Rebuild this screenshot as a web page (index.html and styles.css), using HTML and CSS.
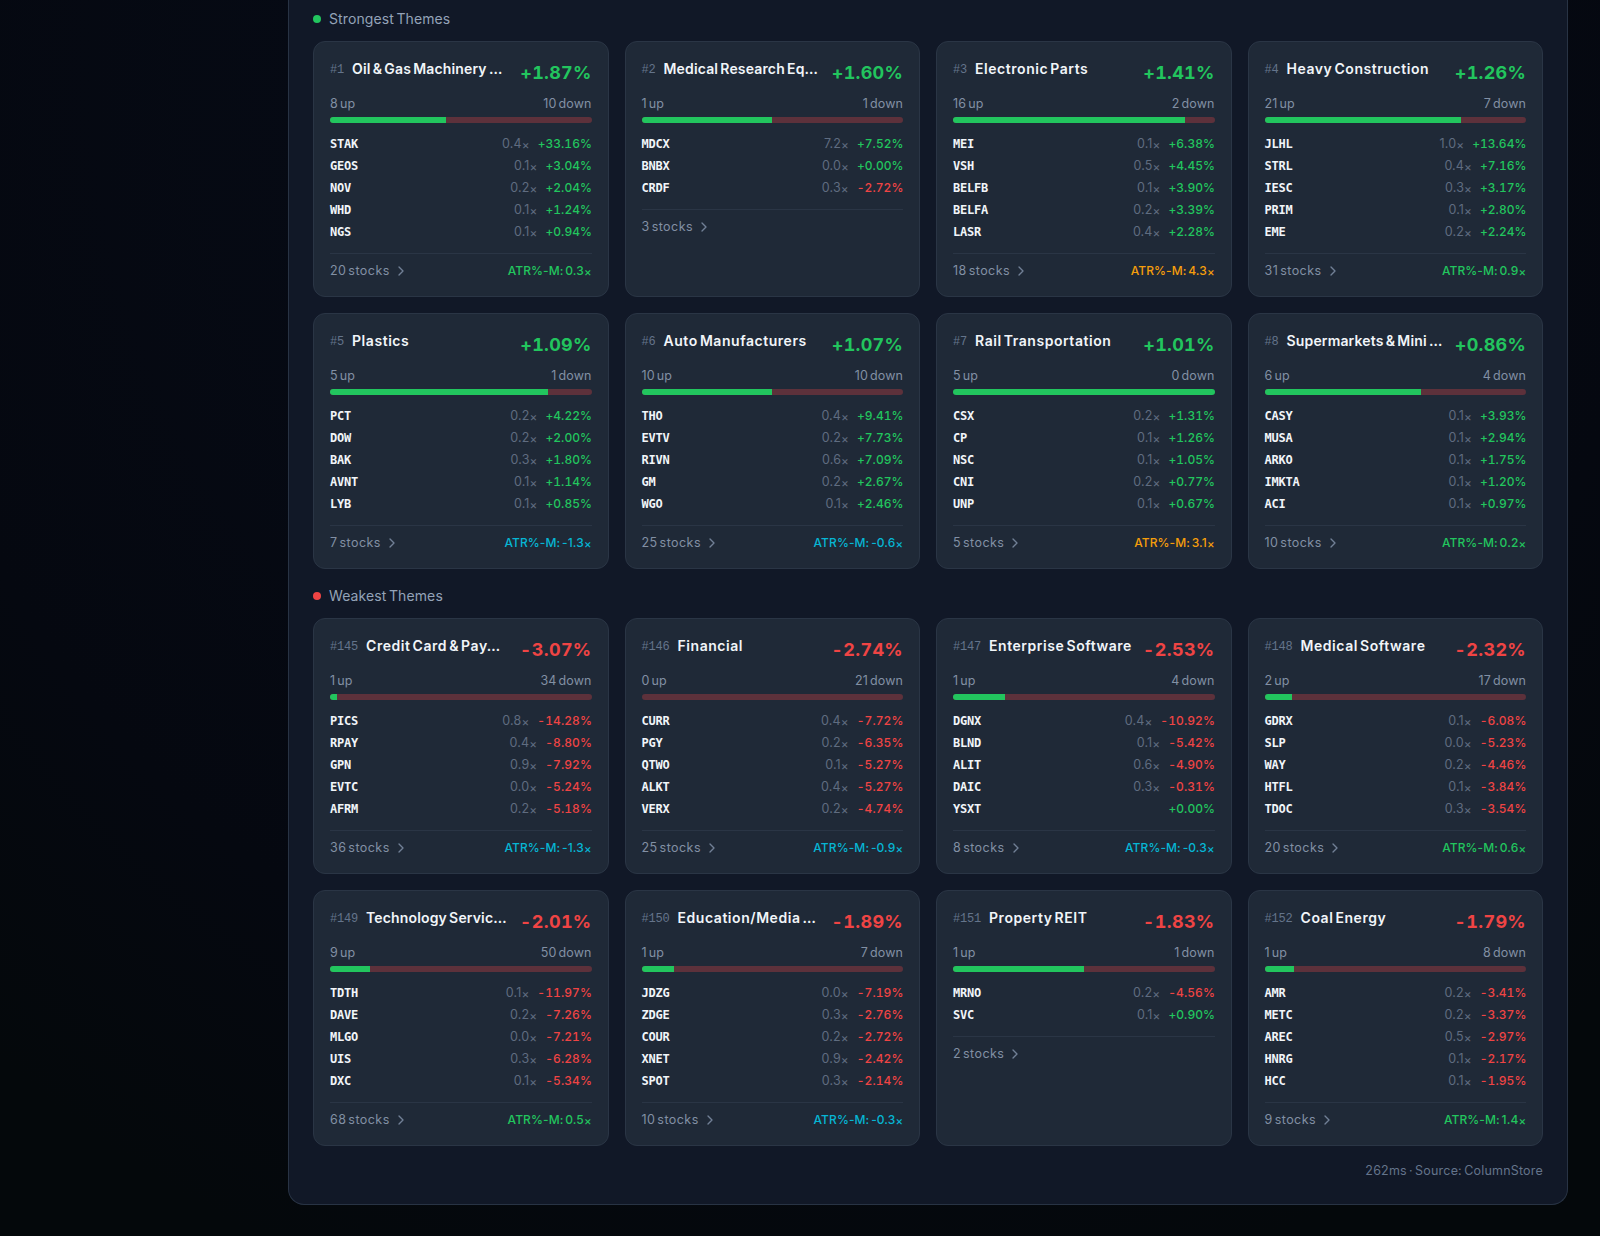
FILE: index.html
```html
<!DOCTYPE html>
<html lang="en">
<head>
<meta charset="utf-8">
<title>Themes</title>
<link rel="stylesheet" href="styles.css">
</head>
<body>
<main class="panel">
  <h2 class="section-title"><span class="dot dot-up"></span>Strongest Themes</h2>
  <section class="grid" id="strongest"></section>
  <h2 class="section-title section-next"><span class="dot dot-down"></span>Weakest Themes</h2>
  <section class="grid" id="weakest"></section>
  <footer class="source">262ms · Source: ColumnStore</footer>
</main>
<script src="themes.js"></script>
</body>
</html>
```
FILE: styles.css
```css
* { box-sizing: border-box; }

body {
  margin: 0;
  height: 1236px;
  overflow: hidden;
  padding-left: 288px;
  background:
    radial-gradient(ellipse 1200px 1300px at 48% 5%, #070c18 0%, #050810 75%, rgba(4, 8, 12, 0) 100%),
    #04080b;
  font-family: Inter, "Liberation Sans", sans-serif;
  font-size: 12px;
  line-height: 18px;
  color: #f1f5f9;
}

.panel {
  width: 1280px;
  height: 1205px;
  padding: 8px 24px 24px;
  background: #111827;
  border: 1px solid #283344;
  border-top: 0;
  border-radius: 0 0 16px 16px;
}

.section-title {
  display: flex;
  align-items: center;
  gap: 8px;
  margin: 0 0 12px;
  font-size: 14px;
  line-height: 21px;
  font-weight: 400;
  letter-spacing: 0.1px;
  word-spacing: -1.5px;
  color: #94a3b8;
}
.section-next { margin-top: 16px; }

.dot { width: 8px; height: 8px; border-radius: 50%; }
.dot-up { background: #22c55e; }
.dot-down { background: #ef4444; }

.grid {
  display: grid;
  grid-template-columns: repeat(4, minmax(0, 1fr));
  gap: 16px;
}

.card {
  height: 256px;
  padding: 16px;
  background: #1f2937;
  border: 1px solid #2a3545;
  border-radius: 12px;
}

.card-head {
  display: flex;
  justify-content: space-between;
  align-items: flex-start;
  height: 27px;
  margin-bottom: 10px;
  white-space: nowrap;
}
.card-name { display: flex; gap: 8px; line-height: 21px; }
.rank {
  font: 400 12px/24px "Liberation Mono", monospace;
  letter-spacing: -0.2px;
  color: #64748b;
}
.name { font-size: 14px; font-weight: 600; letter-spacing: 0.55px; word-spacing: -2px; }
.name-long { letter-spacing: 0.15px; word-spacing: -1.5px; }
.change {
  font-size: 18px;
  line-height: 29px;
  font-weight: 700;
  font-variant-numeric: tabular-nums;
  letter-spacing: 0.25px;
}
.change.down { letter-spacing: 0.35px; }

.counts {
  display: flex;
  justify-content: space-between;
  margin-bottom: 4px;
  font-size: 12.5px;
  letter-spacing: 0.1px;
  word-spacing: -1.5px;
  color: #8290a4;
}

.bar {
  height: 6px;
  margin-bottom: 12px;
  overflow: hidden;
  border-radius: 3px;
  background: #5d313b;
}
.bar-fill { height: 100%; background: #22c55e; }

.stocks { display: grid; gap: 4px; margin-bottom: 12px; }
.stock { display: flex; height: 18px; }
.ticker {
  font: 700 12px/18px "DejaVu Sans Mono", monospace;
  letter-spacing: -0.22px;
}
.rvol { margin-left: auto; margin-right: 8px; font-size: 12.5px; letter-spacing: 0.15px; color: #5f6c80; }
.times { font-size: 0.95em; line-height: 0; vertical-align: -1px; letter-spacing: 0; }
.pct {
  margin-right: -0.5px;
  font-weight: 500;
  font-variant-numeric: tabular-nums;
  letter-spacing: 0.05px;
}
.pct.down { letter-spacing: 0.1px; }

.card-foot {
  display: flex;
  justify-content: space-between;
  padding-top: 8px;
  border-top: 1px solid #2a3545;
  color: #8290a4;
  word-spacing: -1.5px;
}
.more { display: flex; align-items: center; gap: 3px; height: 18px; font-size: 12.5px; letter-spacing: 0.45px; word-spacing: -2px; }
.chevron {
  width: 16px;
  height: 16px;
  fill: none;
  stroke: #718096;
  stroke-width: 2;
  stroke-linecap: round;
  stroke-linejoin: round;
}
.atr { font-weight: 500; letter-spacing: 0.1px; }

.up { color: #22c55e; }
.down { color: #ef4444; }
.hot { color: #f59e0b; }
.cold { color: #06b6d4; }

.source {
  margin-top: 16px;
  text-align: right;
  font-size: 12.5px;
  letter-spacing: 0.2px;
  word-spacing: -1.5px;
  color: #64748b;
}
```
FILE: themes.js
```js
// rank, name, change, up, down, stocks "ticker rvol pct", stock count, ATR multiple, ATR tone
const strongest = [
  [1, "Oil & Gas Machinery …", "+1.87", 8, 10, "STAK 0.4 +33.16,GEOS 0.1 +3.04,NOV 0.2 +2.04,WHD 0.1 +1.24,NGS 0.1 +0.94", 20, "0.3", "up"],
  [2, "Medical Research Eq…", "+1.60", 1, 1, "MDCX 7.2 +7.52,BNBX 0.0 +0.00,CRDF 0.3 -2.72", 3],
  [3, "Electronic Parts", "+1.41", 16, 2, "MEI 0.1 +6.38,VSH 0.5 +4.45,BELFB 0.1 +3.90,BELFA 0.2 +3.39,LASR 0.4 +2.28", 18, "4.3", "hot"],
  [4, "Heavy Construction", "+1.26", 21, 7, "JLHL 1.0 +13.64,STRL 0.4 +7.16,IESC 0.3 +3.17,PRIM 0.1 +2.80,EME 0.2 +2.24", 31, "0.9", "up"],
  [5, "Plastics", "+1.09", 5, 1, "PCT 0.2 +4.22,DOW 0.2 +2.00,BAK 0.3 +1.80,AVNT 0.1 +1.14,LYB 0.1 +0.85", 7, "-1.3", "cold"],
  [6, "Auto Manufacturers", "+1.07", 10, 10, "THO 0.4 +9.41,EVTV 0.2 +7.73,RIVN 0.6 +7.09,GM 0.2 +2.67,WGO 0.1 +2.46", 25, "-0.6", "cold"],
  [7, "Rail Transportation", "+1.01", 5, 0, "CSX 0.2 +1.31,CP 0.1 +1.26,NSC 0.1 +1.05,CNI 0.2 +0.77,UNP 0.1 +0.67", 5, "3.1", "hot"],
  [8, "Supermarkets & Mini …", "+0.86", 6, 4, "CASY 0.1 +3.93,MUSA 0.1 +2.94,ARKO 0.1 +1.75,IMKTA 0.1 +1.20,ACI 0.1 +0.97", 10, "0.2", "up"]
];
const weakest = [
  [145, "Credit Card & Pay…", "-3.07", 1, 34, "PICS 0.8 -14.28,RPAY 0.4 -8.80,GPN 0.9 -7.92,EVTC 0.0 -5.24,AFRM 0.2 -5.18", 36, "-1.3", "cold"],
  [146, "Financial", "-2.74", 0, 21, "CURR 0.4 -7.72,PGY 0.2 -6.35,QTWO 0.1 -5.27,ALKT 0.4 -5.27,VERX 0.2 -4.74", 25, "-0.9", "cold"],
  [147, "Enterprise Software", "-2.53", 1, 4, "DGNX 0.4 -10.92,BLND 0.1 -5.42,ALIT 0.6 -4.90,DAIC 0.3 -0.31,YSXT _ +0.00", 8, "-0.3", "cold"],
  [148, "Medical Software", "-2.32", 2, 17, "GDRX 0.1 -6.08,SLP 0.0 -5.23,WAY 0.2 -4.46,HTFL 0.1 -3.84,TDOC 0.3 -3.54", 20, "0.6", "up"],
  [149, "Technology Servic…", "-2.01", 9, 50, "TDTH 0.1 -11.97,DAVE 0.2 -7.26,MLGO 0.0 -7.21,UIS 0.3 -6.28,DXC 0.1 -5.34", 68, "0.5", "up"],
  [150, "Education/Media …", "-1.89", 1, 7, "JDZG 0.0 -7.19,ZDGE 0.3 -2.76,COUR 0.2 -2.72,XNET 0.9 -2.42,SPOT 0.3 -2.14", 10, "-0.3", "cold"],
  [151, "Property REIT", "-1.83", 1, 1, "MRNO 0.2 -4.56,SVC 0.1 +0.90", 2],
  [152, "Coal Energy", "-1.79", 1, 8, "AMR 0.2 -3.41,METC 0.2 -3.37,AREC 0.5 -2.97,HNRG 0.1 -2.17,HCC 0.1 -1.95", 9, "1.4", "up"]
];

const tone = v => (v[0] === "-" ? "down" : "up");
const times = v => `${v}<span class="times">×</span>`;

const stockRow = line => {
  const [ticker, rvol, pct] = line.split(" ");
  return `<div class="stock"><span class="ticker">${ticker}</span>
    <span class="rvol">${rvol === "_" ? "" : times(rvol)}</span>
    <span class="pct ${tone(pct)}">${pct}%</span></div>`;
};

const nameClass = name => (name.length > 17 && name.endsWith("…") && !name.startsWith("Credit") ? "name name-long" : "name");

const card = ([rank, name, change, up, down, stocks, count, atr, atrTone]) => `
  <article class="card">
    <div class="card-head">
      <div class="card-name"><span class="rank">#${rank}</span><span class="${nameClass(name)}">${name.replace("&", "&amp;")}</span></div>
      <span class="change ${tone(change)}">${change}%</span>
    </div>
    <div class="counts"><span>${up} up</span><span>${down} down</span></div>
    <div class="bar"><div class="bar-fill" style="width:${up / (up + down) * 100}%"></div></div>
    <div class="stocks">${stocks.split(",").map(stockRow).join("")}</div>
    <div class="card-foot">
      <span class="more"><span>${count} stocks</span><svg class="chevron" viewBox="0 0 24 24"><path d="m9 18 6-6-6-6"/></svg></span>
      ${atr ? `<span class="atr ${atrTone}">ATR%-M: ${times(atr)}</span>` : ""}
    </div>
  </article>`;

document.getElementById("strongest").innerHTML = strongest.map(card).join("");
document.getElementById("weakest").innerHTML = weakest.map(card).join("");
```
